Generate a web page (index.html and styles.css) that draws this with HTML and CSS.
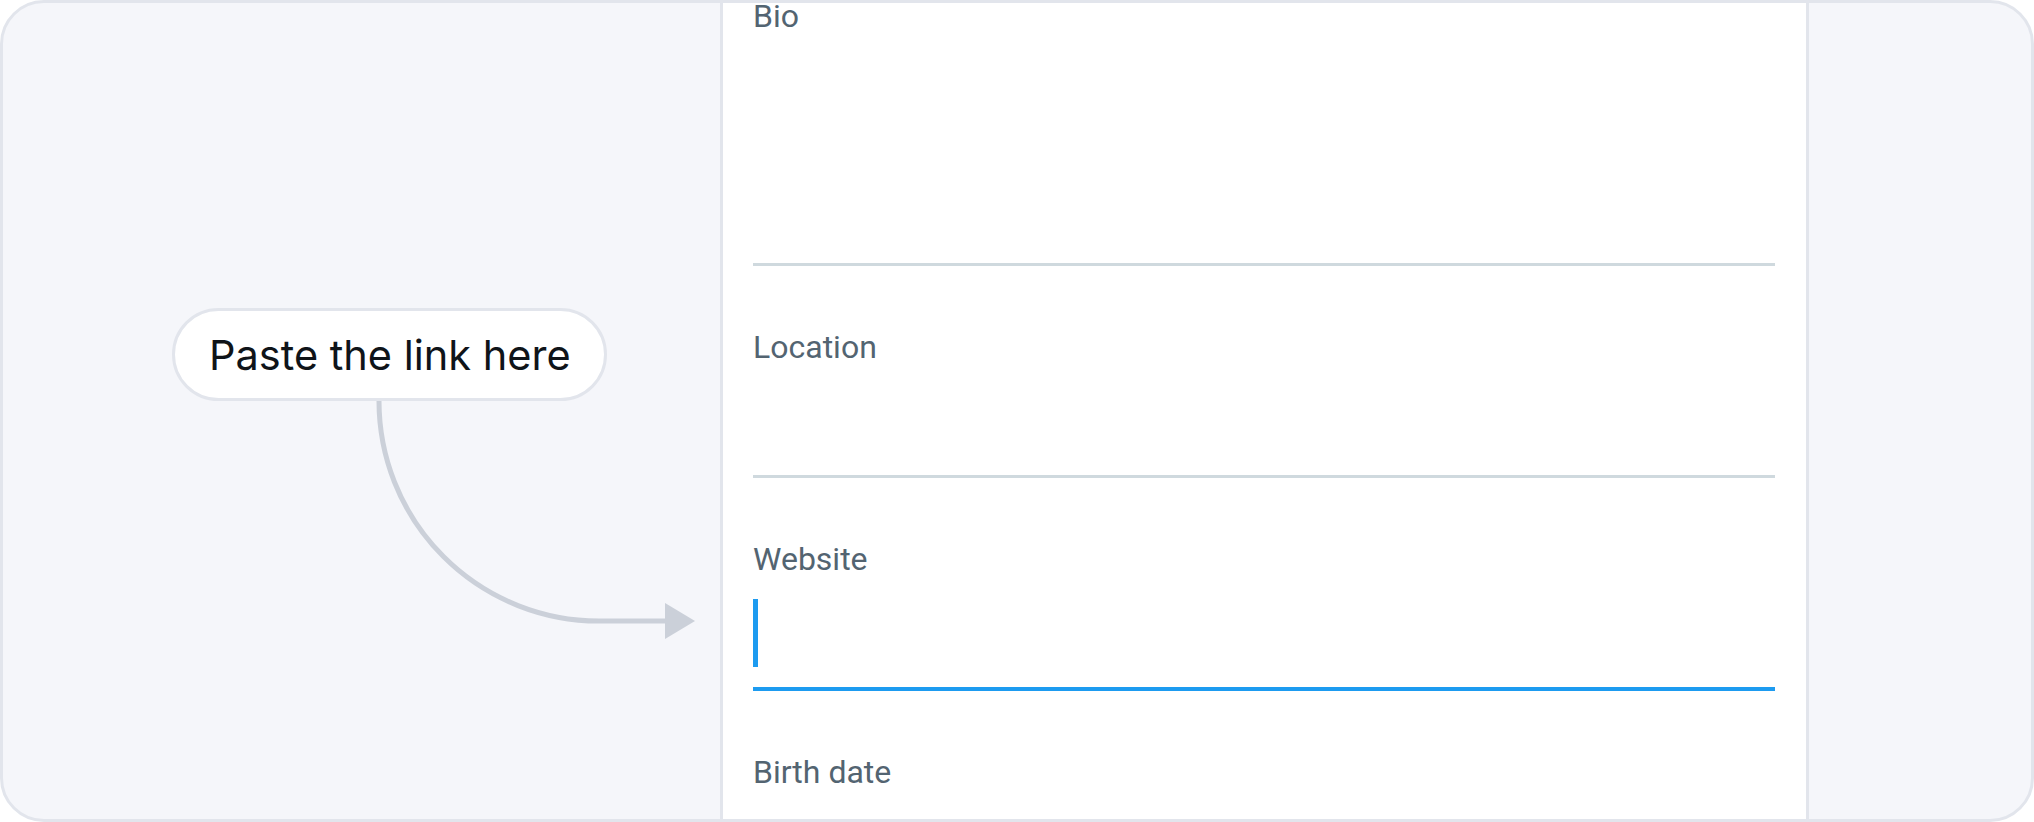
FILE: index.html
```html
<!DOCTYPE html>
<html lang="en">
<head>
<meta charset="utf-8">
<title>Paste the link here</title>
<link rel="stylesheet" href="styles.css">
</head>
<body>
<div class="frame">
  <div class="left">
    <div class="bubble">Paste the link here</div>
    <svg class="connector" width="717" height="816" viewBox="0 0 717 816" aria-hidden="true">
      <path d="M376 392 L376 398 A 220 220 0 0 0 596 618 L 666 618" fill="none" stroke="#cbd0d9" stroke-width="5"/>
      <polygon points="662,600 692,618 662,636" fill="#cbd0d9"/>
    </svg>
  </div>
  <div class="panel">
    <div class="form">
      <div class="field bio">
        <div class="label">Bio</div>
        <div class="input"></div>
      </div>
      <div class="field">
        <div class="label">Location</div>
        <div class="input"></div>
      </div>
      <div class="field">
        <div class="label">Website</div>
        <div class="input active"><span class="caret"></span></div>
      </div>
      <div class="field">
        <div class="label">Birth date</div>
        <div class="input"></div>
      </div>
    </div>
  </div>
  <div class="right"></div>
</div>
</body>
</html>
```

FILE: styles.css
```css
html, body {
  margin: 0;
  padding: 0;
  background: #ffffff;
}

.frame {
  box-sizing: border-box;
  width: 2034px;
  height: 822px;
  display: flex;
  border: 3px solid #e2e5ec;
  border-radius: 44px;
  background: #f5f6fa;
  overflow: hidden;
}

.left {
  position: relative;
  width: 717px;
  flex: none;
}

.bubble {
  position: relative;
  z-index: 1;
  box-sizing: border-box;
  display: flex;
  align-items: center;
  width: 435px;
  height: 93px;
  margin: 305px 0 0 169px;
  padding: 0 0 0 34px;
  border: 3px solid #e2e5ec;
  border-radius: 47px;
  background: #ffffff;
  font-family: Inter, "Noto Sans", sans-serif;
  font-size: 41.5px;
  color: #0f1419;
  white-space: nowrap;
}

.connector {
  position: absolute;
  left: 0;
  top: 0;
}

.panel {
  box-sizing: border-box;
  width: 1089px;
  flex: none;
  height: 100%;
  background: #ffffff;
  border-left: 3px solid #e2e5ec;
  border-right: 3px solid #e2e5ec;
  padding: 0 31px 0 30px;
  overflow: hidden;
}

.form {
  margin-top: -7px;
  display: flex;
  flex-direction: column;
}

.field {
  padding-top: 61px;
}

.field.bio {
  padding-top: 0;
}

.label {
  font-family: Roboto, "Liberation Sans", sans-serif;
  font-size: 32px;
  line-height: 40px;
  color: #536471;
}

.input {
  box-sizing: border-box;
  height: 111px;
  border-bottom: 3px solid #cfd9de;
}

.bio .input {
  height: 230px;
}

.input.active {
  height: 112px;
  padding-top: 20px;
  border-bottom: 4px solid #1d9bf0;
}

.caret {
  display: block;
  width: 5px;
  height: 68px;
  background: #1d9bf0;
}

.right {
  flex: 1;
}
```
